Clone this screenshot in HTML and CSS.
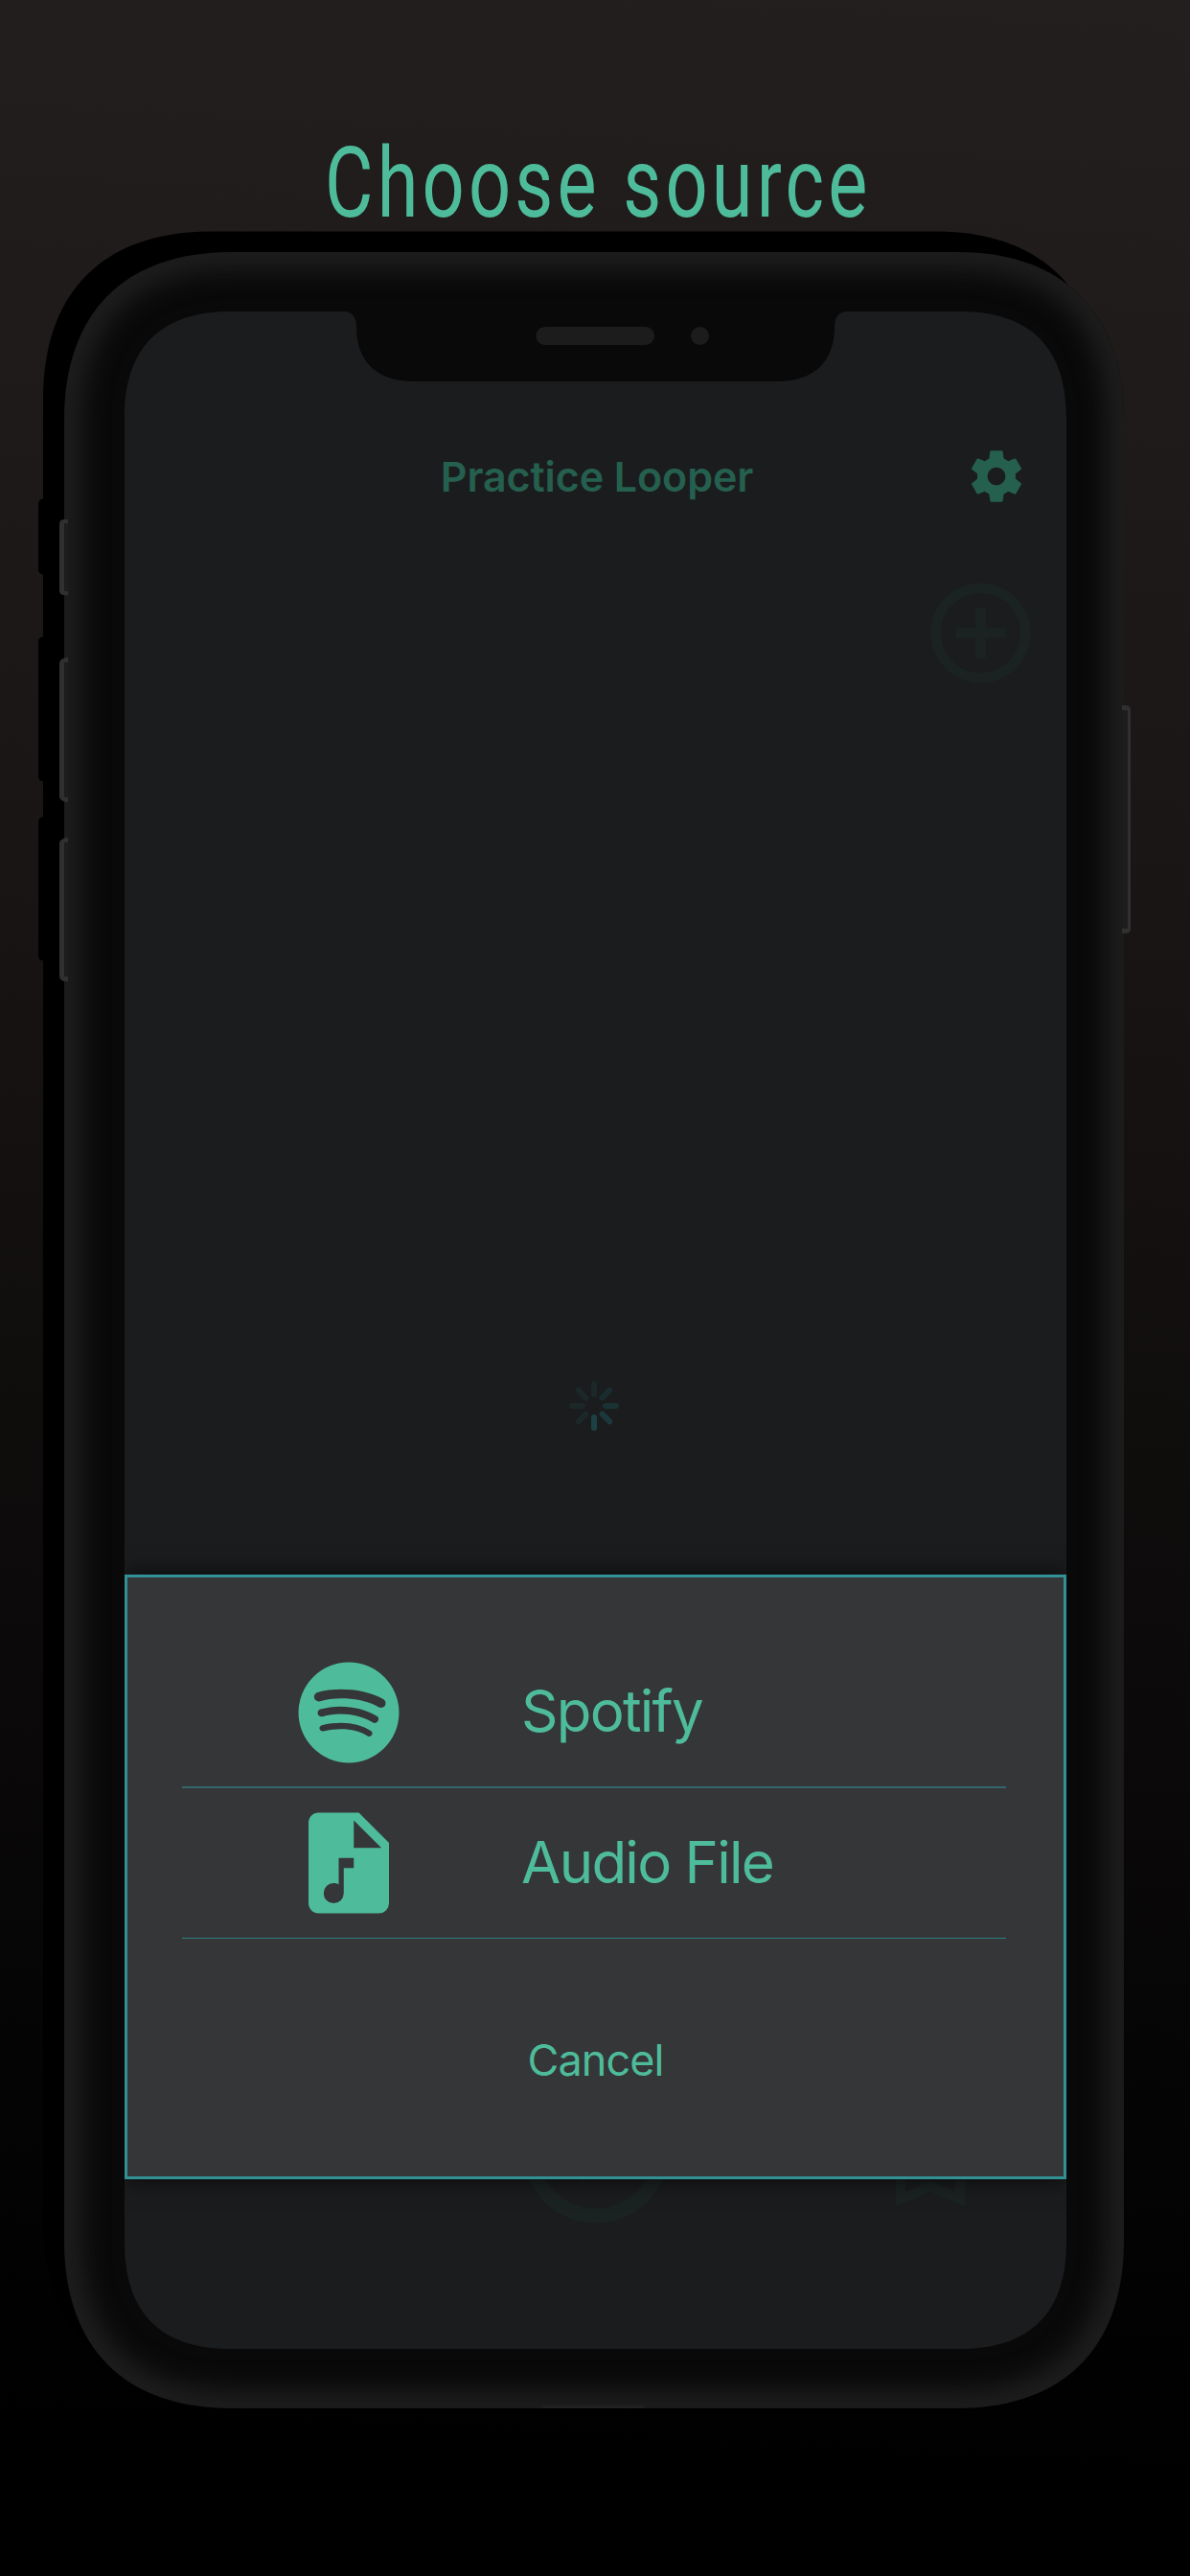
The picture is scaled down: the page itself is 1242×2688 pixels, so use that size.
FILE: index.html
```html
<!DOCTYPE html>
<html lang="en">
<head>
<meta charset="utf-8">
<title>Practice Looper</title>
<link rel="stylesheet" href="styles.css">
</head>
<body>
<main class="stage">
  <svg class="device" viewBox="0 0 1242 2688" aria-hidden="true">
    <defs>
      <path id="shell" d="M67 438C67 326 130 263 242 263H998C1110 263 1173 326 1173 438V2338C1173 2450 1110 2513 998 2513H242C130 2513 67 2450 67 2338Z"/>
      <clipPath id="shell-clip"><use href="#shell"/></clipPath>
      <filter id="soft" filterUnits="userSpaceOnUse" x="0" y="180" width="1242" height="2420" color-interpolation-filters="sRGB"><feGaussianBlur stdDeviation="13"/></filter>
    </defs>
    <g class="shade" transform="translate(-22 -21.5)">
      <use href="#shell"/>
      <rect x="62" y="542" width="12" height="79" rx="5"/>
      <rect x="62" y="686" width="12" height="151" rx="5"/>
      <rect x="62" y="874" width="12" height="150" rx="5"/>
    </g>
    <use href="#shell" class="shell"/>
    <g clip-path="url(#shell-clip)">
      <use href="#shell" class="rim" filter="url(#soft)"/>
      <rect x="567" y="2510" width="105" height="4" fill="#222"/>
    </g>
    <g class="key">
      <path d="M71 542H67Q62 542 62 547V616Q62 621 67 621H71Z"/>
      <path d="M71 686H69Q62 688 62 692V831Q62 835 69 837H71Z"/>
      <path d="M71 874H69Q62 876 62 880V1018Q62 1024 69 1024H71Z"/>
      <path d="M1171 736H1175Q1180 736 1180 741V969Q1180 974 1175 974H1171Z"/>
    </g>
    <g class="key-well">
      <path d="M67 546h4v71h-4zM67 691h4v141h-4zM67 879h4v140h-4zM1171 741h6v228h-6z"/>
    </g>
    <path class="glass" d="M130 435C130 363 168 325 240 325H358Q372 325 372 341C372 378 394 398 432 398H811C849 398 871 378 871 341Q871 325 885 325H1003C1075 325 1113 363 1113 435V2341C1113 2413 1075 2451 1003 2451H240C168 2451 130 2413 130 2341Z"/>
    <rect class="sensor" x="559.5" y="341" width="123.500" height="19" rx="9"/>
    <rect class="sensor" x="721" y="341" width="19" height="19" rx="9.500"/>
  </svg>

  <h1 class="headline"><span>Choose source</span></h1>

  <section class="screen">
    <header class="navbar">
      <h2 class="app-title">Practice Looper</h2>
      <svg class="gear" viewBox="0 0 24 24"><path d="M19.43 12.98c.04-.32.07-.64.07-.98s-.03-.66-.07-.98l2.110-1.650c.19-.15.24-.42.12-.64l-2-3.460c-.12-.22-.39-.3-.61-.22l-2.490 1c-.52-.4-1.080-.73-1.690-.98l-.38-2.650C14.460 2.180 14.250 2 14 2h-4c-.25 0-.46.18-.49.42l-.38 2.650c-.61.25-1.170.59-1.690.98l-2.490-1c-.23-.09-.49 0-.61.22l-2 3.460c-.13.22-.07.49.12.64l2.110 1.650c-.04.32-.07.65-.07.98s.03.66.07.98l-2.110 1.650c-.19.15-.24.42-.12.64l2 3.460c.12.22.39.3.61.22l2.490-1c.52.4 1.080.73 1.690.98l.38 2.650c.03.24.24.42.49.42h4c.25 0 .46-.18.49-.42l.38-2.650c.61-.25 1.170-.59 1.690-.98l2.490 1c.23.09.49 0 .61-.22l2-3.460c.12-.22.07-.49-.12-.64l-2.110-1.650zM12 15.500c-1.930 0-3.500-1.570-3.500-3.500s1.570-3.500 3.500-3.500 3.500 1.570 3.500 3.500-1.570 3.500-3.500 3.500z"/></svg>
    </header>
    <div class="actions">
      <svg class="ghost" viewBox="0 0 24 24"><path d="M13 7h-2v4H7v2h4v4h2v-4h4v-2h-4V7zm-1-5C6.480 2 2 6.480 2 12s4.480 10 10 10 10-4.480 10-10S17.520 2 12 2zm0 18c-4.410 0-8-3.590-8-8s3.590-8 8-8 8 3.590 8 8-3.590 8-8 8z"/></svg>
    </div>
    <div class="loading">
      <svg class="spinner" viewBox="-28 -28 56 56" stroke-width="6" stroke-linecap="round">
        <path d="M0-12V-23" stroke="#1c2828"/>
        <path d="M0-12V-23" stroke="#1b2c30" transform="rotate(45)"/>
        <path d="M0-12V-23" stroke="#1b3235" transform="rotate(90)"/>
        <path d="M0-12V-23" stroke="#1b393c" transform="rotate(135)"/>
        <path d="M0-12V-23" stroke="#1b4144" transform="rotate(180)"/>
        <path d="M0-12V-23" stroke="#1c2828" transform="rotate(225)"/>
        <path d="M0-12V-23" stroke="#1c2727" transform="rotate(270)"/>
        <path d="M0-12V-23" stroke="#1c2828" transform="rotate(315)"/>
      </svg>
    </div>
    <footer class="player">
      <svg class="ghost play" viewBox="0 0 24 24"><path d="M10 16.500l6-4.500-6-4.500v9zM12 2C6.480 2 2 6.480 2 12s4.480 10 10 10 10-4.480 10-10S17.520 2 12 2zm0 18c-4.410 0-8-3.590-8-8s3.590-8 8-8 8 3.590 8 8-3.590 8-8 8z"/></svg>
      <svg class="ghost bookmark" viewBox="0 0 24 24"><path d="M17 3H7c-1.100 0-1.990.9-1.990 2L5 21l7-3 7 3V5c0-1.100-.9-2-2-2zm0 15l-5-2.180L7 18V5h10v13z"/></svg>
    </footer>

    <div class="sheet-layer">
      <div class="sheet">
        <ul class="sources">
          <li class="source first">
            <svg class="source-icon" viewBox="0 0 24 24"><path d="M17.900,10.900C14.700,9 9.350,8.800 6.300,9.750C5.800,9.900 5.300,9.600 5.150,9.150C5,8.650 5.300,8.150 5.750,8C9.300,6.950 15.150,7.150 18.850,9.350C19.300,9.600 19.450,10.200 19.200,10.650C18.950,11 18.350,11.150 17.900,10.900M17.800,13.700C17.550,14.050 17.100,14.200 16.750,13.950C14.050,12.300 9.950,11.800 6.800,12.800C6.400,12.900 5.950,12.700 5.850,12.300C5.750,11.900 5.950,11.450 6.350,11.350C10,10.250 14.500,10.800 17.600,12.700C17.900,12.850 18.050,13.350 17.800,13.700M16.600,16.450C16.400,16.750 16.050,16.850 15.750,16.650C13.400,15.200 10.450,14.900 6.950,15.700C6.600,15.800 6.300,15.550 6.200,15.250C6.100,14.900 6.350,14.600 6.650,14.500C10.450,13.650 13.750,14 16.350,15.600C16.700,15.750 16.750,16.150 16.600,16.450M12,2A10,10 0 0,0 2,12A10,10 0 0,0 12,22A10,10 0 0,0 22,12A10,10 0 0,0 12,2Z"/></svg>
            <span class="label">Spotify</span>
          </li>
          <li class="source second">
            <svg class="source-icon" viewBox="0 0 24 24"><path d="M13,9H18.500L13,3.500V9M6,2H14L20,8V20A2,2 0 0,1 18,22H6C4.890,22 4,21.100 4,20V4C4,2.890 4.890,2 6,2M9,16A2,2 0 0,0 7,18A2,2 0 0,0 9,20A2,2 0 0,0 11,18V13H13V11H10V16.270C9.710,16.100 9.360,16 9,16Z"/></svg>
            <span class="label">Audio File</span>
          </li>
        </ul>
        <button class="cancel">Cancel</button>
      </div>
    </div>
  </section>
</main>
</body>
</html>
```
FILE: styles.css
```css
* { box-sizing: border-box; }

body {
  margin: 0;
  background: #000;
  font-family: Inter, "Liberation Sans", sans-serif;
}

.stage {
  position: relative;
  width: 1242px;
  height: 2688px;
  overflow: hidden;
  background: linear-gradient(183deg, #231f1e 0%, #1f1b1a 14%, #1a1615 32%, #100d0d 54%, #060506 78%, #000 94%);
}

/* Phone body drawn behind the screen contents */
.device {
  position: absolute;
  inset: 0;
  width: 1242px;
  height: 2688px;
}
.shade { fill: #000; }
.shell { fill: #090909; }
.rim { fill: none; stroke: #1e1e1e; stroke-width: 38px; }
.key { fill: #303030; }
.key-well { fill: #1d1d1d; }
.glass { fill: #1b1c1e; }
.sensor { fill: #1c1c1c; }

.headline {
  position: relative;
  display: flex;
  justify-content: center;
  height: 325px;
  margin: 0;
  padding: 131px 0 0 6px;
  color: #4ebc9a;
  font: 400 102px/120px Roboto, sans-serif;
  white-space: nowrap;
}
.headline span {
  letter-spacing: 5.5px;
  transform: scaleX(.76);
}

.screen {
  position: relative;
  display: flex;
  flex-direction: column;
  width: 983px;
  height: 2126px;
  margin-left: 130px;
}

.navbar {
  display: grid;
  grid-template-columns: 1fr auto 1fr;
  align-items: center;
  height: 64px;
  margin-top: 140px;
  padding: 0 41px 0 44px;
}
.app-title {
  grid-column: 2;
  margin: 0;
  color: #255f4e;
  font-size: 43px;
  font-weight: 600;
  line-height: 60px;
  letter-spacing: -.1px;
}
.gear {
  justify-self: end;
  width: 64px;
  height: 64px;
  fill: #255f4e;
}

.ghost {
  width: 125px;
  height: 125px;
  fill: #1b2322;
}
.actions {
  display: flex;
  justify-content: flex-end;
  padding: 69px 27px 0 0;
}
.loading {
  display: flex;
  justify-content: center;
  padding: 716px 3px 0 0;
}
.spinner { width: 56px; height: 56px; }

.player {
  display: grid;
  grid-template-columns: 1fr 184px 1fr;
  margin-top: auto;
  height: 300px;
}
.player .play {
  grid-column: 2;
  width: 184px;
  height: 184px;
}
.player .bookmark {
  justify-self: end;
  margin: 43px 80px 0 0;
  width: 124px;
  height: 124px;
}

.sheet-layer {
  position: absolute;
  inset: 0;
  padding-top: 1318px;
  clip-path: inset(0);
}
.sheet {
  display: flex;
  flex-direction: column;
  height: 631px;
  border: 3px solid #319194;
  background: #353638;
  box-shadow: 0 0 22px rgba(0, 0, 0, .75);
}
.sources {
  margin: 63px 60px 0 57px;
  padding: 0;
  list-style: none;
}
.source {
  display: flex;
  align-items: center;
  height: 157px;
  padding-left: 111px;
  border-bottom: 2px solid #34666a;
  color: #4ebc9a;
}
.source.second { border-bottom: 1px solid #2f7c80; }
.source-icon {
  width: 126px;
  height: 126px;
  fill: currentColor;
}
.label {
  margin: 0 0 3px 117px;
  font-size: 60px;
  line-height: 72px;
  letter-spacing: -1.75px;
}
.cancel {
  align-self: center;
  margin-top: 97px;
  padding: 0;
  border: 0;
  background: none;
  color: #4ebc9a;
  font: 400 45px/60px Inter, "Liberation Sans", sans-serif;
  letter-spacing: -.9px;
}
```
